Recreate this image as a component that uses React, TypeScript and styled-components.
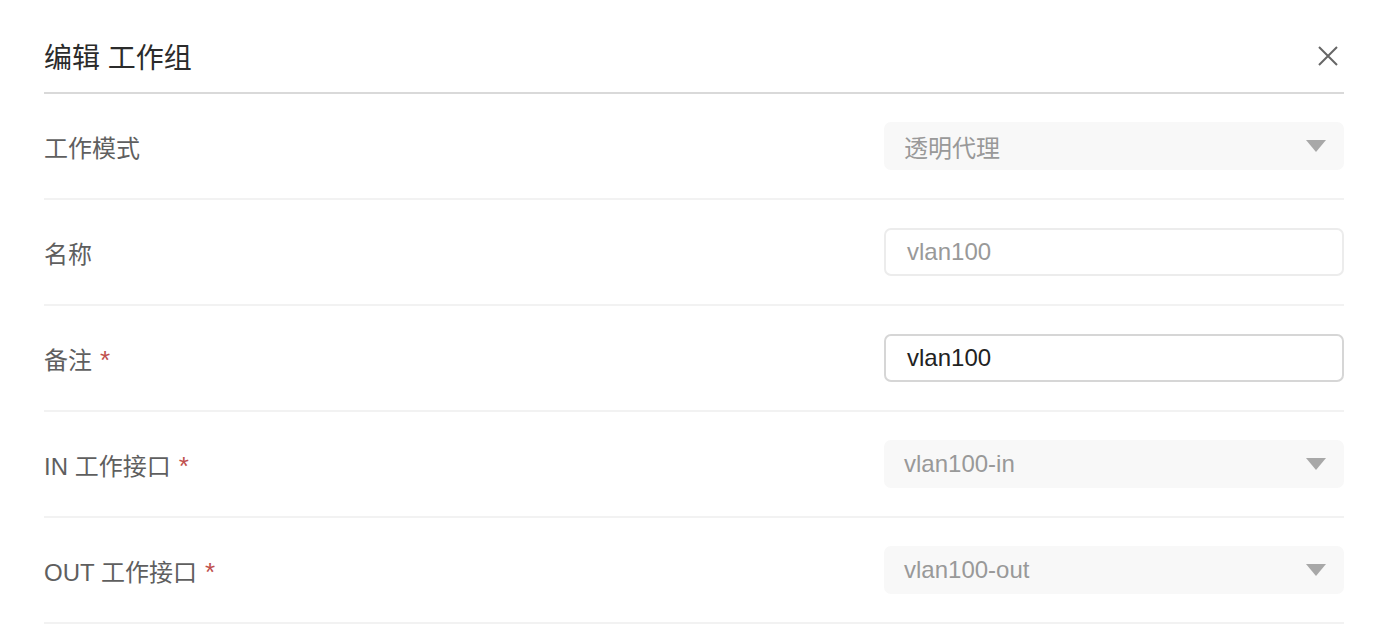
import React from 'react';
import styled, { createGlobalStyle } from 'styled-components';


interface Field {
  label: string;
  required?: boolean;
  kind: 'select' | 'input';
  value: string;
  active?: boolean;
}

const fields: Field[] = [
  { label: '工作模式', kind: 'select', value: '透明代理' },
  { label: '名称', kind: 'input', value: 'vlan100' },
  { label: '备注', required: true, kind: 'input', value: 'vlan100', active: true },
  { label: 'IN 工作接口', required: true, kind: 'select', value: 'vlan100-in' },
  { label: 'OUT 工作接口', required: true, kind: 'select', value: 'vlan100-out' },
];

const App: React.FC = () => {
  return (
    <>
      <GlobalStyle />
      <Dialog>
        <Header>
          <Title>编辑 工作组</Title>
          <CloseButton aria-label="close">
            <svg width="20" height="20" viewBox="0 0 20 20">
              <path d="M1 1 L19 19 M19 1 L1 19" stroke="#666" strokeWidth="2" fill="none" />
            </svg>
          </CloseButton>
        </Header>
        {fields.map(field => (
          <Row key={field.label}>
            <Label>
              {field.label}
              {field.required && <Required>*</Required>}
            </Label>
            {field.kind === 'select' ? (
              <SelectBox>
                <span>{field.value}</span>
                <Caret />
              </SelectBox>
            ) : (
              <InputBox $active={field.active}>{field.value}</InputBox>
            )}
          </Row>
        ))}
      </Dialog>
    </>
  );
};


const GlobalStyle = createGlobalStyle`
  body {
    margin: 0;
    background: #fff;
    font-family: "Liberation Sans", "Noto Sans CJK SC", sans-serif;
  }
`;

const Dialog = styled.div`
  width: 1300px;
  padding-left: 44px;
`;

const Header = styled.div`
  display: flex;
  align-items: center;
  justify-content: space-between;
  height: 72px;
  padding-top: 20px;
  border-bottom: 2px solid #d9d9d9;
`;

const Title = styled.h1`
  margin: 0;
  font-size: 28px;
  font-weight: 400;
  color: #2b2b2b;
`;

const CloseButton = styled.button`
  display: flex;
  background: transparent;
  border: none;
  padding: 0;
  margin-right: 6px;
  cursor: pointer;
`;

const Row = styled.div`
  display: flex;
  align-items: center;
  justify-content: space-between;
  height: 104px;
  border-bottom: 2px solid #f2f2f2;
`;

const Label = styled.div`
  font-size: 24px;
  color: #5f5f5f;
`;

const Required = styled.span`
  color: #c0504d;
  margin-left: 8px;
  font-size: 26px;
`;

const SelectBox = styled.div`
  box-sizing: border-box;
  display: flex;
  align-items: center;
  justify-content: space-between;
  width: 460px;
  height: 48px;
  padding: 0 18px 0 20px;
  border-radius: 7px;
  background: #f8f8f8;
  font-size: 24px;
  color: #999;
`;

const Caret = styled.span`
  width: 0;
  height: 0;
  border-left: 10px solid transparent;
  border-right: 10px solid transparent;
  border-top: 12px solid #a8a8a8;
`;

const InputBox = styled.div<{ $active?: boolean }>`
  box-sizing: border-box;
  display: flex;
  align-items: center;
  width: 460px;
  height: 48px;
  padding: 0 21px;
  border-radius: 7px;
  border: 2px solid ${props => props.$active ? '#d6d6d6' : '#ececec'};
  font-size: 24px;
  color: ${props => props.$active ? '#222' : '#999'};
`;

export default App;
